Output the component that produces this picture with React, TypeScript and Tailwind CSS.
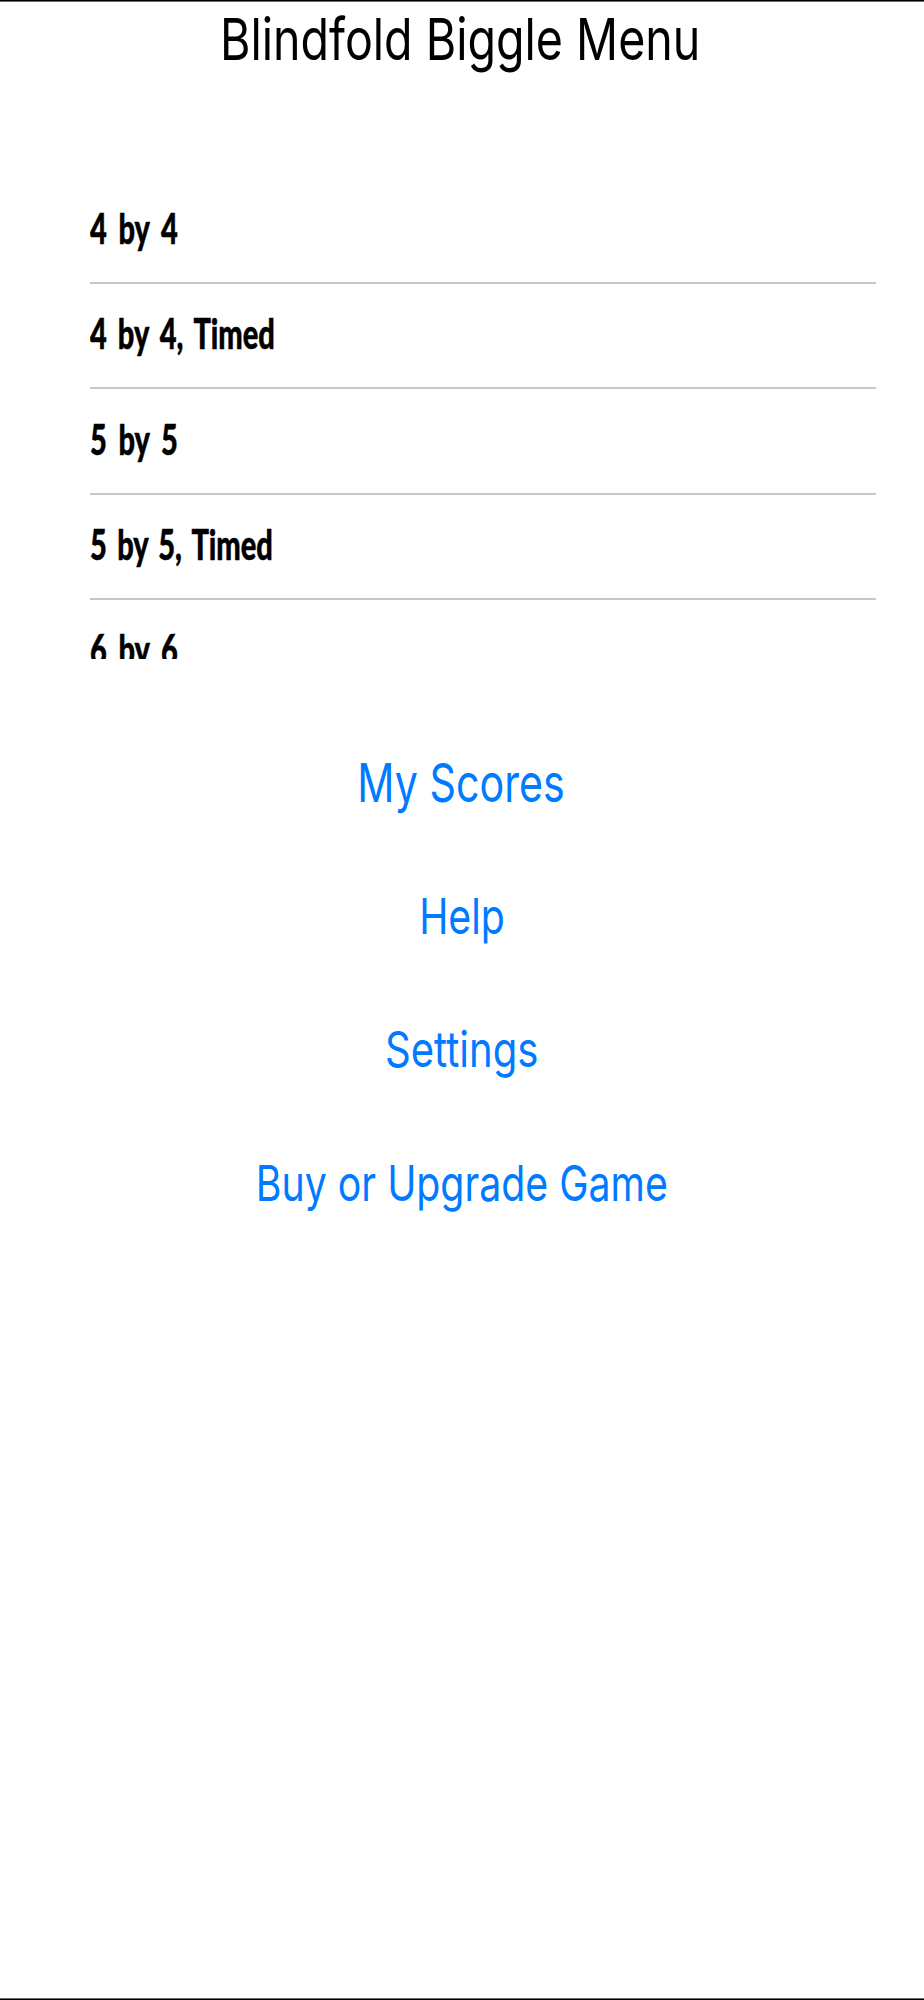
const games = [
  { label: '4 by 4', row: 'h-[105px]', spacing: '[word-spacing:7px]' },
  { label: '4 by 4, Timed', row: 'h-[105px]', spacing: '[word-spacing:6px]' },
  { label: '5 by 5', row: 'h-[106px]', spacing: '[word-spacing:7px]' },
  { label: '5 by 5, Timed', row: 'h-[105px]', spacing: '[word-spacing:5px]' },
  { label: '6 by 6', row: 'h-[105px]', spacing: '[word-spacing:7px]' },
];

const actions = [
  { label: 'My Scores', text: 'text-[53.5px] scale-x-[0.77] pr-[3px]' },
  { label: 'Help', text: 'text-[49.5px] scale-x-[0.793]' },
  { label: 'Settings', text: 'text-[49.5px] scale-x-[0.81]' },
  { label: 'Buy or Upgrade Game', text: 'text-[49.5px] scale-x-[0.793]' },
];

export default function App() {
  return (
    <div className="flex h-[2000px] w-[924px] flex-col overflow-hidden border-y border-black bg-white font-['Inter',sans-serif]">
      <div className="h-px shrink-0 bg-[#6b6869]" />

      <header className="flex h-[74px] shrink-0 items-center justify-center pr-[3px]">
        <h1 className="scale-x-[0.803] whitespace-nowrap text-[58px] leading-none text-black">Blindfold Biggle Menu</h1>
      </header>

      {/* scrolling list, the last row is cut off */}
      <ul className="mt-[103px] ml-[90px] h-[480px] w-[786px] shrink-0 overflow-hidden font-['Lato',sans-serif]">
        {games.map((game) => (
          <li key={game.label} className={`flex items-center border-b-2 border-[#c8c7cc] pb-[5px] ${game.row}`}>
            <span
              className={`origin-left scale-x-[0.69] whitespace-nowrap text-[42px] leading-none font-black text-black [-webkit-text-stroke:0.5px_black] ${game.spacing}`}
            >
              {game.label}
            </span>
          </li>
        ))}
      </ul>

      <nav className="mt-[57px] flex shrink-0 flex-col items-center">
        {actions.map((action) => (
          <button key={action.label} className="flex h-[133.5px] items-center justify-center text-[#007aff]">
            <span className={`whitespace-nowrap leading-none ${action.text}`}>{action.label}</span>
          </button>
        ))}
      </nav>

      <div className="mt-auto h-px shrink-0 bg-[#6b6869]" />
    </div>
  );
}
